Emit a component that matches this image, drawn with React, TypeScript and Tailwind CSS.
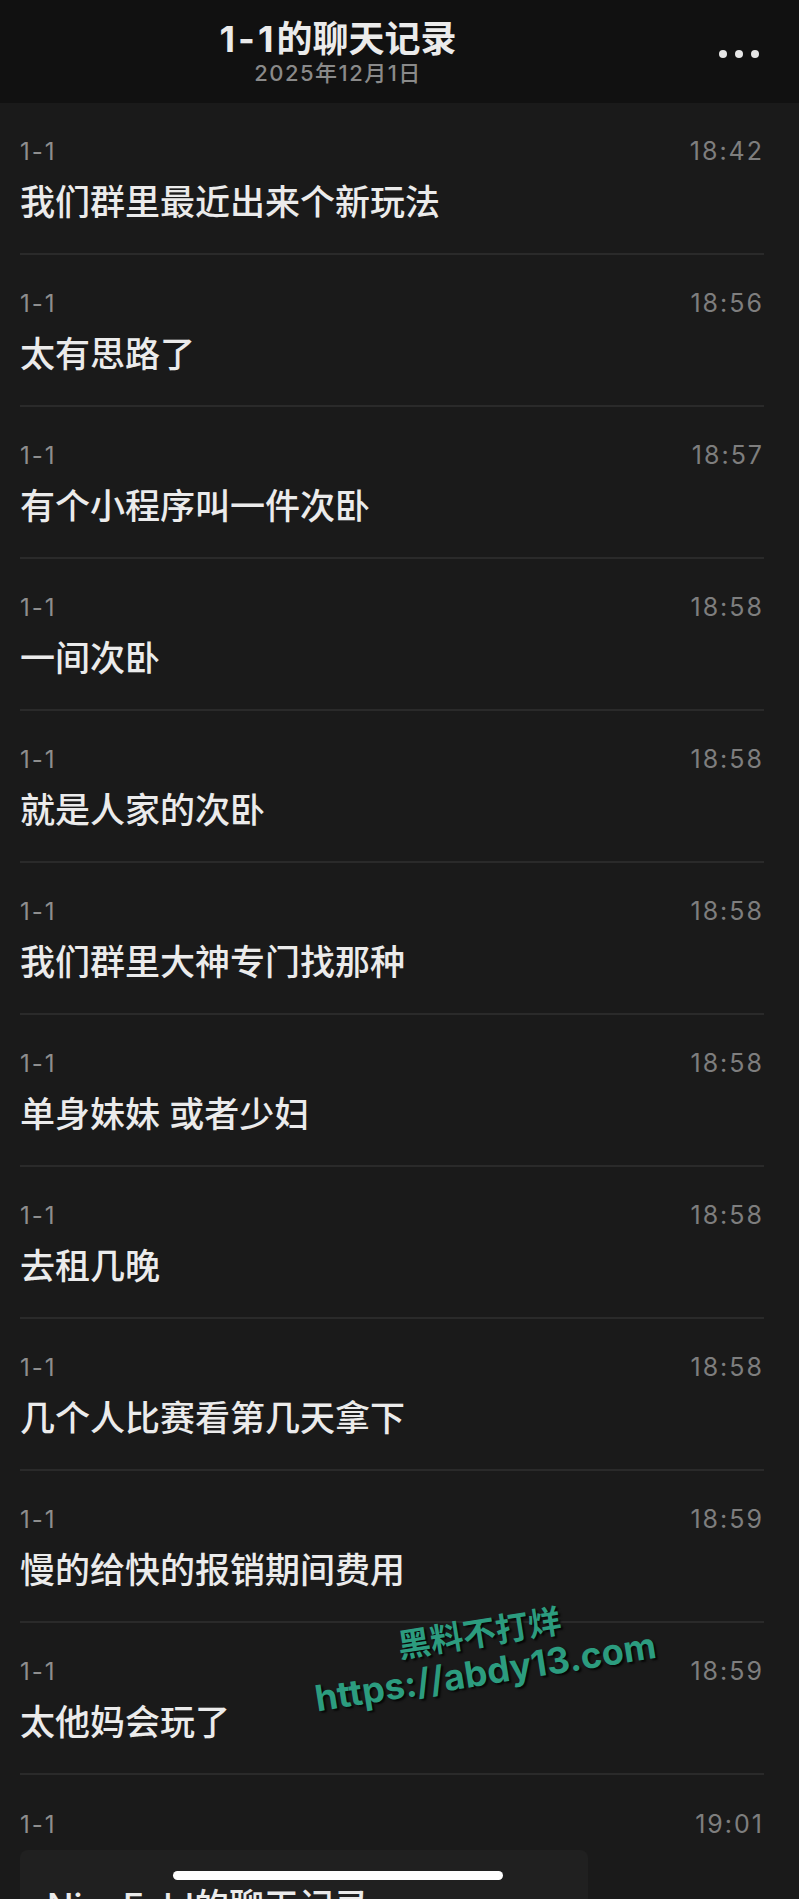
const messages = [
  { time: "18:42", text: "我们群里最近出来个新玩法" },
  { time: "18:56", text: "太有思路了" },
  { time: "18:57", text: "有个小程序叫一件次卧" },
  { time: "18:58", text: "一间次卧" },
  { time: "18:58", text: "就是人家的次卧" },
  { time: "18:58", text: "我们群里大神专门找那种" },
  { time: "18:58", text: "单身妹妹 或者少妇" },
  { time: "18:58", text: "去租几晚" },
  { time: "18:58", text: "几个人比赛看第几天拿下" },
  { time: "18:59", text: "慢的给快的报销期间费用" },
  { time: "18:59", text: "太他妈会玩了" },
];

const font = "font-['Inter','Noto_Sans_CJK_SC',sans-serif]";

function MetaLine({ time }: { time: string }) {
  return (
    <div className="flex h-[30px] items-center justify-between">
      <span className="text-[24px] tracking-[2px] text-[#8e8e8e]">1-1</span>
      <span className="text-[25px] tracking-[2px] text-[#7e7e7e]">{time}</span>
    </div>
  );
}

export default function App() {
  return (
    <div className={`relative h-[1899px] w-[799px] overflow-hidden bg-[#1a1a1a] ${font}`}>
      {/* 顶部栏 */}
      <header className="flex h-[103px] items-start bg-[#111111]">
        <div className="flex w-[676px] flex-col items-center pt-[18px]">
          <h1 className="text-[36px] font-bold leading-[42px] text-[#ebebeb]">
            <span className="tracking-[3px]">1-1</span>的聊天记录
          </h1>
          <p className="mt-[1px] text-[22px] font-medium leading-[25px] tracking-[1.5px] text-[#8a8a8a]">2025年12月1日</p>
        </div>
        <div className="ml-[43px] mt-[50px] flex gap-[8px]">
          <span className="h-[8px] w-[8px] rounded-full bg-[#e6e6e6]" />
          <span className="h-[8px] w-[8px] rounded-full bg-[#e6e6e6]" />
          <span className="h-[8px] w-[8px] rounded-full bg-[#e6e6e6]" />
        </div>
      </header>

      {/* 消息列表 */}
      <div className="ml-5 mr-[35px]">
        {messages.map((m, i) => (
          <div key={i} className="border-b-2 border-[#2a2a2a] pt-[34px] pb-[31px]">
            <MetaLine time={m.time} />
            <p className="mt-[15px] text-[35px] font-medium leading-[40px] text-[#ebebeb]">{m.text}</p>
          </div>
        ))}

        {/* 转发的聊天记录 */}
        <div className="pt-[35px]">
          <MetaLine time="19:01" />
          <div className="mt-[10px] w-[568px] rounded-lg bg-[#202020] px-[27px] pt-[36px] pb-10">
            <p className="text-[35px] font-medium leading-[40px] text-[#ebebeb]">NiceFold的聊天记录</p>
          </div>
        </div>
      </div>

      {/* 水印 */}
      <div className="pointer-events-none absolute left-[310px] top-[1614px] flex -rotate-[9deg] flex-col items-center font-bold text-[#2c9c7f] [text-shadow:2px_2px_2px_rgba(0,0,0,0.8)]">
        <span className="text-[33px] leading-[38px]">黑料不打烊</span>
        <span className="text-[36px] leading-[40px]">https://abdy13.com</span>
      </div>

      {/* Home 指示条 */}
      <div className="absolute left-[173px] top-[1871px] h-[9px] w-[330px] rounded-full bg-white" />
    </div>
  );
}
